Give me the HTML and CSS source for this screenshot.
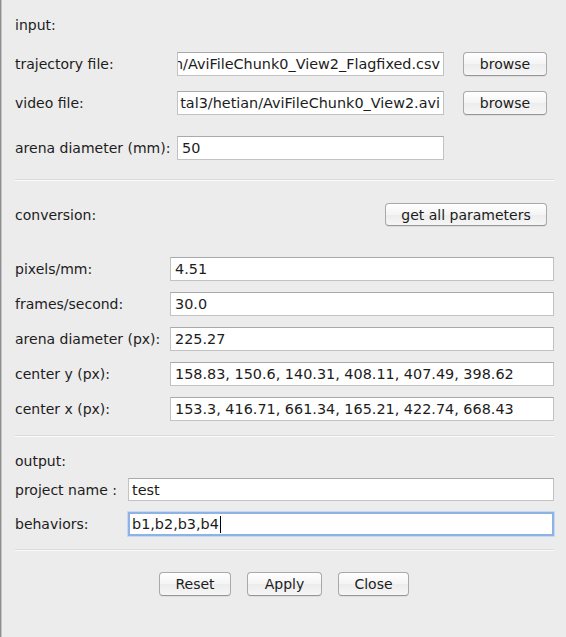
FILE: index.html
```html
<!DOCTYPE html>
<html>
<head>
<meta charset="utf-8">
<link rel="stylesheet" href="styles.css">
</head>
<body>
<div class="panel">
  <div class="row r-input"><span class="label">input:</span></div>

  <div class="row r-traj">
    <span class="label w-in">trajectory file:</span>
    <div class="field f-in scrolled"><span>an/AviFileChunk0_View2_Flagfixed.csv</span></div>
    <button class="btn b-browse">browse</button>
  </div>

  <div class="row r-video">
    <span class="label w-in">video file:</span>
    <div class="field f-in scrolled"><span>tal3/hetian/AviFileChunk0_View2.avi</span></div>
    <button class="btn b-browse">browse</button>
  </div>

  <div class="row r-arena">
    <span class="label w-in">arena diameter (mm):</span>
    <div class="field f-in"><span>50</span></div>
  </div>

  <div class="sep s-1"></div>

  <div class="row r-conv">
    <span class="label grow">conversion:</span>
    <button class="btn b-params">get all parameters</button>
  </div>

  <div class="row r-first">
    <span class="label w-conv">pixels/mm:</span>
    <div class="field f-conv"><span>4.51</span></div>
  </div>
  <div class="row r-next">
    <span class="label w-conv">frames/second:</span>
    <div class="field f-conv"><span>30.0</span></div>
  </div>
  <div class="row r-next">
    <span class="label w-conv">arena diameter (px):</span>
    <div class="field f-conv"><span>225.27</span></div>
  </div>
  <div class="row r-next">
    <span class="label w-conv">center y (px):</span>
    <div class="field f-conv"><span>158.83, 150.6, 140.31, 408.11, 407.49, 398.62</span></div>
  </div>
  <div class="row r-next">
    <span class="label w-conv">center x (px):</span>
    <div class="field f-conv"><span>153.3, 416.71, 661.34, 165.21, 422.74, 668.43</span></div>
  </div>

  <div class="sep s-2"></div>

  <div class="row r-output"><span class="label">output:</span></div>
  <div class="row r-proj">
    <span class="label w-out">project name :</span>
    <div class="field f-out"><span>test</span></div>
  </div>
  <div class="row r-beh">
    <span class="label w-out">behaviors:</span>
    <div class="field f-out focused"><span>b1,b2,b3,b4</span><span class="caret"></span></div>
  </div>

  <div class="sep s-3"></div>

  <div class="actions">
    <button class="btn b-reset">Reset</button>
    <button class="btn b-apply">Apply</button>
    <button class="btn b-close">Close</button>
  </div>
</div>
</body>
</html>
```

FILE: styles.css
```css
html, body {
  margin: 0;
  padding: 0;
  background: #ececec;
}
body {
  font-family: "DejaVu Sans", "Lucida Grande", sans-serif;
  font-size: 14px;
  color: #1c1c1c;
  width: 566px;
  height: 637px;
  overflow: hidden;
  box-shadow: inset 1px 0 0 #8e8e8e, inset 2px 0 0 #c4c4c4;
}
.panel {
  padding: 0 12px 0 15px;
  display: flex;
  flex-direction: column;
}
.row {
  display: flex;
  align-items: center;
  height: 24px;
}
.label {
  white-space: nowrap;
  flex-shrink: 0;
}
.grow { flex: 1; }
.w-in { width: 162px; }
.w-conv { width: 155px; }
.w-out { width: 113px; }

.r-input { margin-top: 13px; }
.r-traj { margin-top: 15px; }
.r-video { margin-top: 15px; }
.r-arena { margin-top: 21px; }
.s-1 { margin-top: 19px; }
.r-conv { margin-top: 22px; height: 23px; }
.r-first { margin-top: 31px; }
.r-next { margin-top: 11px; }
.s-2 { margin-top: 14px; }
.r-output { margin-top: 12px; }
.r-proj { margin-top: 5px; height: 23px; }
.r-beh { margin-top: 11px; }
.s-3 { margin-top: 13px; }

.field {
  box-sizing: border-box;
  height: 24px;
  background: #fff;
  border: 1px solid #c2c2c2;
  border-top-color: #a9a9a9;
  display: flex;
  align-items: center;
  padding: 0 3px 0 4px;
  overflow: hidden;
  white-space: nowrap;
  font-size: 14.4px;
}
.field span { flex-shrink: 0; }
.scrolled { justify-content: flex-end; }
.f-in { width: 267px; }
.f-conv { width: 384px; }
.f-out { width: 426px; padding-left: 3px; }
.r-proj .field { height: 23px; }
.focused {
  width: 428px;
  border: 2px solid #8db2e3;
  padding-left: 2px;
  box-shadow: 0 0 0 1px #c5d9f1;
}
.caret {
  display: inline-block;
  width: 1px;
  height: 17px;
  background: #000;
  margin-left: 1px;
}

.sep {
  height: 0;
  border-top: 1px solid #dadada;
  border-bottom: 1px solid #fbfbfb;
}

.btn {
  box-sizing: border-box;
  font-family: inherit;
  font-size: 14px;
  color: #1c1c1c;
  height: 24px;
  padding: 0;
  border: 1px solid #a9a9a9;
  border-bottom-color: #969696;
  border-radius: 4px;
  background: linear-gradient(#ffffff, #f4f4f4 50%, #ececec 51%, #f6f6f6);
  box-shadow: 0 1px 0 rgba(0,0,0,0.06);
  display: flex;
  align-items: center;
  justify-content: center;
}
.b-browse { width: 84px; margin-left: 19px; margin-top: -1px; }
.b-params { width: 162px; height: 23px; margin-right: 7px; }

.actions {
  display: flex;
  gap: 16px;
  margin-top: 21px;
  padding-left: 144px;
}
.b-reset { width: 72px; }
.b-apply { width: 75px; }
.b-close { width: 71px; }
```
